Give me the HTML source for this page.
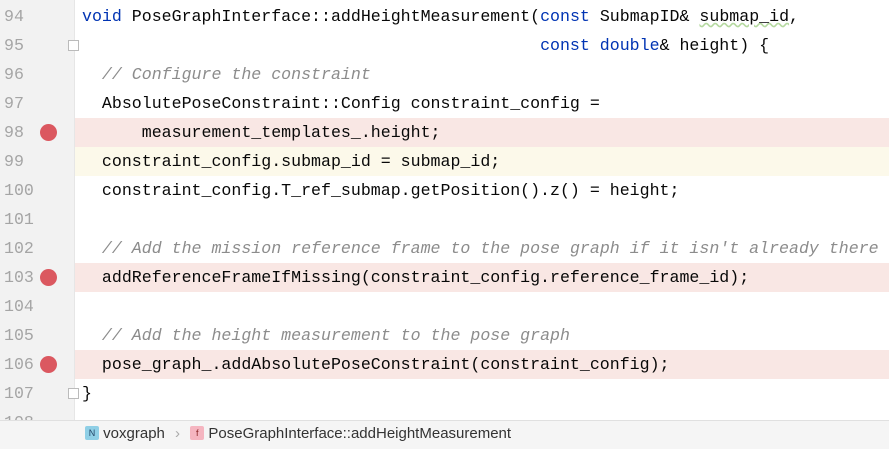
<!DOCTYPE html>
<html><head><style>
body{margin:0;width:889px;height:448px;overflow:hidden;background:#fff;font-family:"Liberation Mono",monospace;}
.gut{position:absolute;left:0;top:0;width:74px;height:420px;background:#f2f2f2;border-right:1px solid #e6e6e6;}
.row{position:absolute;left:0;width:889px;height:29px;line-height:29px;font-size:16.6px;white-space:pre;}
.row .n{position:absolute;left:0;width:74px;color:#a5a5a5;padding-left:4px;box-sizing:border-box;}
.row .c{position:absolute;left:82px;color:#080808;}
.row .hl{position:absolute;left:75px;right:0;top:0;bottom:0;}
.bp{position:absolute;left:40px;top:6px;width:17px;height:17px;border-radius:50%;background:#db5860;}
.k{color:#0033b3}.cm{color:#8c8c8c;font-style:italic}
.bc{position:absolute;left:0;top:420px;width:889px;height:28px;background:#f5f5f5;border-top:1px solid #e0e0e0;font-family:"Liberation Sans",sans-serif;font-size:15px;color:#333;line-height:26px;}
.ic{display:inline-block;width:14px;height:14px;border-radius:2px;font-size:9px;line-height:14px;text-align:center;vertical-align:middle;position:relative;top:-1px;}
.fold{position:absolute;left:68px;width:11px;height:11px;border:1px solid #bbb;background:#fff;box-sizing:border-box;}
</style></head><body>
<div class="gut"></div>
<div class="row" style="top:2px"><span class="n">94</span><span class="c"><span class="k">void</span> PoseGraphInterface::addHeightMeasurement(<span class="k">const</span> SubmapID&amp; <span style="text-decoration:underline wavy #b5d9a0">submap_id</span>,</span></div>
<div class="row" style="top:31px"><span class="n">95</span><span class="c">                                              <span class="k">const double</span>&amp; height) {</span></div>
<div class="fold" style="top:40px"></div>
<div class="row" style="top:60px"><span class="n">96</span><span class="c">  <span class="cm">// Configure the constraint</span></span></div>
<div class="row" style="top:89px"><span class="n">97</span><span class="c">  AbsolutePoseConstraint::Config constraint_config =</span></div>
<div class="row" style="top:118px"><span class="hl" style="background:#f9e7e4"></span><span class="n">98</span><span class="bp"></span><span class="c">      measurement_templates_.height;</span></div>
<div class="row" style="top:147px"><span class="hl" style="background:#fcf9ea"></span><span class="n">99</span><span class="c">  constraint_config.submap_id = submap_id;</span></div>
<div class="row" style="top:176px"><span class="n">100</span><span class="c">  constraint_config.T_ref_submap.getPosition().z() = height;</span></div>
<div class="row" style="top:205px"><span class="n">101</span></div>
<div class="row" style="top:234px"><span class="n">102</span><span class="c">  <span class="cm">// Add the mission reference frame to the pose graph if it isn't already there</span></span></div>
<div class="row" style="top:263px"><span class="hl" style="background:#f9e7e4"></span><span class="n">103</span><span class="bp"></span><span class="c">  addReferenceFrameIfMissing(constraint_config.reference_frame_id);</span></div>
<div class="row" style="top:292px"><span class="n">104</span></div>
<div class="row" style="top:321px"><span class="n">105</span><span class="c">  <span class="cm">// Add the height measurement to the pose graph</span></span></div>
<div class="row" style="top:350px"><span class="hl" style="background:#f9e7e4"></span><span class="n">106</span><span class="bp"></span><span class="c">  pose_graph_.addAbsolutePoseConstraint(constraint_config);</span></div>
<div class="row" style="top:379px"><span class="n">107</span><span class="c">}</span></div>
<div class="fold" style="top:388px"></div>
<div class="row" style="top:408px"><span class="n">108</span></div>
<div class="bc"><span style="position:absolute;left:85px"><span class="ic" style="background:#8fcfe6;color:#246">N</span> voxgraph <span style="color:#aaa;margin:0 6px">›</span> <span class="ic" style="background:#f5b5c0;color:#822">f</span> PoseGraphInterface::addHeightMeasurement</span></div>
</body></html>
